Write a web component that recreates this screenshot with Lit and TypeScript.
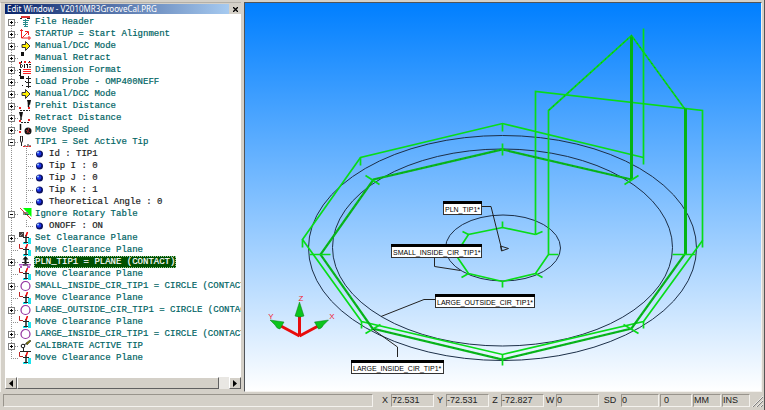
import { LitElement, html, svg, css, nothing } from "lit";
import { customElement } from "lit/decorators.js";
import { classMap } from "lit/directives/class-map.js";

type Row = { icon?: string; text: string; open?: boolean; leaf?: boolean; child?: boolean; lastChild?: boolean; selected?: boolean };

const ROWS: Row[] = [
  { icon: "header", text: "File Header" },
  { icon: "axes", text: "STARTUP = Start Alignment" },
  { icon: "arrow", text: "Manual/DCC Mode" },
  { icon: "retract", text: "Manual Retract" },
  { icon: "dim", text: "Dimension Format" },
  { icon: "probe", text: "Load Probe - OMP400NEFF" },
  { icon: "arrow", text: "Manual/DCC Mode" },
  { icon: "prehit", text: "Prehit Distance" },
  { icon: "retdist", text: "Retract Distance" },
  { icon: "speed", text: "Move Speed" },
  { icon: "tip", text: "TIP1 = Set Active Tip", open: true },
  { text: "Id : TIP1", child: true },
  { text: "Tip I : 0", child: true },
  { text: "Tip J : 0", child: true },
  { text: "Tip K : 1", child: true },
  { text: "Theoretical Angle : 0", child: true, lastChild: true },
  { icon: "rotary", text: "Ignore Rotary Table", open: true },
  { text: "ONOFF : ON", child: true, lastChild: true },
  { icon: "setplane", text: "Set Clearance Plane" },
  { icon: "move", text: "Move Clearance Plane", leaf: true },
  { icon: "plane", text: "PLN_TIP1 = PLANE (CONTACT)", selected: true },
  { icon: "move", text: "Move Clearance Plane", leaf: true },
  { icon: "circle", text: "SMALL_INSIDE_CIR_TIP1 = CIRCLE (CONTACT" },
  { icon: "move", text: "Move Clearance Plane", leaf: true },
  { icon: "circle", text: "LARGE_OUTSIDE_CIR_TIP1 = CIRCLE (CONTACT" },
  { icon: "move", text: "Move Clearance Plane", leaf: true },
  { icon: "circle", text: "LARGE_INSIDE_CIR_TIP1 = CIRCLE (CONTACT" },
  { icon: "calibrate", text: "CALIBRATE ACTIVE TIP" },
  { icon: "move", text: "Move Clearance Plane", leaf: true },
];

const clearance = svg`
  <path d="M10 6h3v6h-3zM5 10h4v2H5z" fill="#1ce4ee"/>
  <path d="M8 3v8" stroke="#222" stroke-width="1.500"/><path d="M5 5.500h6M6 10.500h4" stroke="#222"/>
  <path d="M9.500 0L8 4" stroke="#e00" stroke-width="1.500"/>`;

const ICONS: Record<string, unknown> = {
  header: svg`<path d="M3 0h9v2H3z" fill="#d33"/><path d="M2 2.500h2M9 2.500h3" stroke="#222"/><path d="M5 4.500h6M5 6.500h5M5 8.500h5M6 10.500h4M7.500 3v8" stroke="#2a8d8d"/>`,
  axes: svg`<path d="M3.500 1v9H13M2 2.500h3M11 8v4M4 10l6-6M7 3.500h3.500V7" stroke="#f02020" fill="none"/>`,
  arrow: svg`<path d="M4 4.500h3.500v-3L12 6l-4.500 4.500v-3H4z" fill="#fff000" stroke="#333" stroke-width="1"/>`,
  retract: svg`<path d="M3 0h3v4H3zM3 9h1v2H3zM11 9h1v2h-1z" fill="#111"/><path d="M1 10h2v2H1zM6 9h2v2H6zM10 10h3v1h-3z" fill="#e22"/>`,
  dim: svg`<path d="M2.500.5h1l1 1v1l-1 1h-1zM6.500 0v4M8 .5h2M9.500 0v4M11 .5h2M11 3h2M2.500 5v6M1 5.500h2M1 8.500h2M1 11.500h2" fill="none" stroke="#111"/><path d="M5 5.500h8M5 7.500h8M5 9.500h8" stroke="#f22" stroke-width="1"/>`,
  probe: svg`<path d="M2 0h4v3H2zM7 5h1v1H7zM4 9h1v1H4z" fill="#111"/><path d="M8 2.500h5M8 6.500h5M8 10.500h5M10.500 0v12" stroke="#222"/>`,
  prehit: svg`<path d="M9 0l1 4 2 1 1-5z" fill="#111"/><path d="M10.500 3v4" stroke="#111" stroke-width="1.500"/><path d="M1 7h2v2H1zM10 7h2v2h-2z" fill="#e22"/><path d="M2 10.500h10" stroke="#222" stroke-dasharray="2 1"/>`,
  retdist: svg`<path d="M1 0l1 4 2 1 1-5z" fill="#111"/><path d="M3 4v4" stroke="#111" stroke-width="1.500"/><path d="M1 8h2v2H1zM10 7h2v2h-2z" fill="#e22"/><path d="M3 10.500h9" stroke="#222" stroke-dasharray="2 1"/>`,
  speed: svg`<path d="M2.500 0v6" stroke="#111" stroke-width="1.500"/><path d="M1 7h2v2H1z" fill="#e22"/><circle cx="10" cy="7" r="3.500" fill="#111"/><path d="M8 6l4 3M11 4l-2 5" stroke="#a33"/>`,
  tip: svg`<path d="M2.500 0h2v5l-1 2-1-2z" fill="#fff" stroke="#222"/><path d="M3.500 7v3M7 9v2M10 8v3M12 9v2" stroke="#222"/><path d="M5 10.500h8" stroke="#e22" stroke-width="1" stroke-dasharray="2 1"/>`,
  rotary: svg`<path d="M5 0h8.500v9z" fill="#0f0"/><path d="M5 4h5v3H5z" fill="#888"/><path d="M2 0l11 11" stroke="#c33"/><path d="M7 6.500h4" stroke="#173"/>`,
  setplane: svg`${clearance}<path d="M1 0h5v5H1z" fill="#443c3c"/><path d="M2 4l3-3" stroke="#999"/>`,
  move: svg`<path d="M1.500 0v4.500H5" stroke="#b22" fill="none"/>${clearance}`,
  plane: svg`<path d="M7.500 0l3 3.500h-2V8h-2V3.500h-2z" fill="#111"/><path d="M1 8h12v1.500H1zM2 10h2v2H2zM9 10h3v2H9z" fill="#b25ac4"/><path d="M4 6.500h7M5 9h5" stroke="#222"/>`,
  circle: svg`<circle cx="7.500" cy="6" r="4.500" fill="none" stroke="#912e9e" stroke-width="1.200"/>`,
  calibrate: svg`<circle cx="5" cy="6" r="1.800" fill="none" stroke="#111"/><path d="M5.500 8v3.500M2 11.500h11M6 5l3-2" stroke="#222" fill="none"/><path d="M8 3l4-3 1 1-4 4z" fill="#7c7400" stroke="#222" stroke-width=".5"/>`,
};

const RING_TOP = "M536 234V91L703 110V240L644 321L503 354L362 321L303 239L361 157L503 123L644 157";
const RING_LOW = "M632 179L503 149L374 179L321 254L373 328L503 359L632 328L685 254";
const TICKS =
  "M503 123v8M361 157v8M303 239v8M362 321v7M503 354v11M644 321v7M703 240v7M644 28v136M503 143v12M366 175l14 9M310 254h21M366 333l15-9M624 324l15 9M673 254h23M625 184l14-9M503 221v6M463 231l6 3M462 277l7-4M503 281v6M543 277l-7-4M549 254h10M536 234l7-3";

const NOTES = [
  { text: "PLN_TIP1*", x: 443, y: 201, w: 39 },
  { text: "SMALL_INSIDE_CIR_TIP1*", x: 391, y: 244, w: 91 },
  { text: "LARGE_OUTSIDE_CIR_TIP1*", x: 435, y: 294, w: 100 },
  { text: "LARGE_INSIDE_CIR_TIP1*", x: 351, y: 360, w: 93 },
];

@customElement("edit-tree")
class EditTree extends LitElement {
  static styles = css`
    :host { display: flex; flex-direction: column; min-width: 0; background: #fff; }
    .title { display: flex; height: 10px; background: #d4d0c8; }
    .name {
      flex: 1; margin: 0; padding-left: 2px; white-space: nowrap;
      font: 8px/10px "Noto Sans", sans-serif; color: #fff;
      background: linear-gradient(90deg, #0a246a, #a6caf0);
    }
    button { padding: 0; border: 0; border-radius: 0; display: grid; place-items: center; }
    .close { width: 12px; background: #d4d0c8; }
    ul { list-style: none; margin: 0; padding: 2px 0 0; flex: 1; overflow: hidden; }
    li { display: flex; height: 12px; font: 9px/12px "Liberation Mono", monospace; color: #006464; -webkit-text-stroke: 0.2px; }
    li.child { color: #222; }
    .cell { position: relative; flex: none; width: 13px; height: 12px; }
    .cell svg { display: block; }
    .toggle {
      position: absolute; left: 3px; top: 3px; box-sizing: border-box; width: 7px; height: 7px; background: #fff; border: 1px solid #808080;
    }
    .icon { flex: none; display: block; }
    .label { padding: 0 1px; white-space: pre; }
    .selected .label { background: #005000; color: #fff; outline: 1px dotted #9c9; outline-offset: -1px; }
    .scroll { display: flex; height: 12px; background: #e9e7e3; }
    .scroll button {
      width: 12px; background: #d4d0c8; border: 1px solid; border-color: #fff #606060 #606060 #fff;
    }
    .scroll .thumb { flex: 1; }
    .track { width: 10px; }
  `;

  branch(r: Row, i: number) {
    const top = i === 0 ? 6 : 0;
    const bottom = i === ROWS.length - 1 ? 6 : 12;
    return html`<span class="cell">
      <svg width="13" height="12" aria-hidden="true">
        <path d="M6.500 ${top}V${bottom}${r.child ? "" : "M6 6.500H13"}" stroke="#909090" stroke-dasharray="1 1" fill="none" />
      </svg>
      ${r.child || r.leaf
        ? nothing
        : html`<button class="toggle" aria-label="${r.open ? "Collapse" : "Expand"} ${r.text}">
            <svg width="3" height="3"><path d="M0 1.500h3${r.open ? "" : "M1.500 0v3"}" stroke="#000" /></svg>
          </button>`}
    </span>`;
  }

  render() {
    return html`
      <div class="title">
        <h1 class="name">Edit Window - V2010MR3GrooveCal.PRG</h1>
        <button class="close" aria-label="Close">
          <svg width="5" height="5"><path d="M0 0l5 5M5 0L0 5" stroke="#000" stroke-width="1.300" /></svg>
        </button>
      </div>
      <ul>
        ${ROWS.map(
          (r, i) => html`<li class=${classMap({ child: !!r.child, selected: !!r.selected })}>
            ${this.branch(r, i)}${r.child
              ? html`<svg class="icon" width="30" height="12" aria-hidden="true">
                  <path d="M8.500 0V${r.lastChild ? 6 : 12}M8 6.500H16" stroke="#909090" stroke-dasharray="1 1" fill="none" />
                  <circle cx="21.500" cy="6" r="3.500" fill="#0a1060" />
                  <circle cx="21" cy="5.500" r="2.300" fill="#1c34e8" />
                  <circle cx="20" cy="4.500" r="1" fill="#9fd0ff" />
                </svg>`
              : html`<svg class="icon" width="16" height="12" aria-hidden="true">${ICONS[r.icon!]}</svg>`}<span
              class="label">${r.text}</span></li>`
        )}
      </ul>
      <div class="scroll">
        <button aria-label="Scroll left"><svg width="4" height="7"><path d="M4 0v7L0 3.500z" /></svg></button>
        <button class="thumb" aria-label="Scroll position"></button>
        <span class="track"></span>
        <button aria-label="Scroll right"><svg width="4" height="7"><path d="M0 0v7L4 3.500z" /></svg></button>
      </div>
    `;
  }
}

@customElement("part-view")
class PartView extends LitElement {
  static styles = css`
    :host { display: block; min-width: 0; background: linear-gradient(#007fff, #fff); }
    svg { display: block; width: 100%; }
    .ring { fill: none; stroke: #1c2f48; stroke-width: 1; }
    .path { fill: none; stroke: #08dc18; stroke-width: 1.7; }
    .heavy { fill: none; stroke: #08b81a; stroke-width: 2.2; }
    .grain { fill: none; stroke: #0a8a20; stroke-width: 1; stroke-dasharray: 1 4; }
    .thick { fill: none; stroke: #04b414; stroke-width: 3; }
    .leader { fill: none; stroke: #222; stroke-width: 1; }
    .note { font: 7px "Liberation Sans", sans-serif; fill: #000; }
    .axis { font: 8px "Liberation Sans", sans-serif; fill: #f02030; text-anchor: middle; }
  `;

  render() {
    return html`<svg viewBox="245 3 516 388" role="img" aria-label="Part view">
      <g class="ring">
        <ellipse cx="502.500" cy="248" rx="194" ry="112.500" />
        <ellipse cx="502.500" cy="247.500" rx="170" ry="98.500" />
        <ellipse cx="503" cy="248" rx="57.500" ry="33" />
      </g>
      <g transform="translate(-.5 .5)">
        <path class="path" d=${RING_TOP} />
        <path class="heavy" d=${RING_LOW} />
        <path class="grain" d=${RING_LOW} />
        <path class="path" d="M685 108L632 35L549 110V254L536 273L503 281L469 273L456 254L469 234L503 227L536 234" />
        <path class="grain" d="M685 108L632 35L549 110" />
        <path class="thick" d="M632 36V179M686 108V254" />
        <path class="path" d=${TICKS} />
      </g>
      <path class="leader" d="M482 206.500h9l11 44M500.500 246l8 2.500-7 2.500zM434.500 257v9.500l26 4M435 299.500h-11l-43 17M397.500 357v-10l-25-18" />
      ${NOTES.map(
        (n) => svg`<rect x=${n.x + 0.5} y=${n.y + 0.5} width=${n.w - 1} height="13" fill="#fff" stroke="#333"/>
          <rect x=${n.x} y=${n.y} width=${n.w} height="3" fill="#000"/>
          <text class="note" x=${n.x + 2} y=${n.y + 11}>${n.text}</text>`
      )}
      <path d="M299.500 336V315M299.500 336L279 325M299.500 336L320 325" stroke="#e80c0c" stroke-width="3" fill="none" />
      <path d="M299.500 302l4.500 14q-4.500 2-9 0zM270 320l14 2-4 7q-3 0-5-4zM328.500 320l-14 2 4 7q3 0 5-4z" fill="#0cc41c" stroke="#0a7a1a" stroke-width=".5" />
      <text class="axis" x="301" y="301">Z</text>
      <text class="axis" x="271" y="319">Y</text>
      <text class="axis" x="332" y="319">X</text>
    </svg>`;
  }
}

@customElement("app-root")
class AppRoot extends LitElement {
  static styles = css`
    :host { display: flex; flex-direction: column; min-height: 100vh; box-sizing: border-box; background: #d4d0c8; border-right: 1px solid #555; border-bottom: 1px solid #555; }
    .main { display: grid; grid-template-columns: 241px minmax(0, 1fr); flex: 1; padding-top: 2px; }
    .side { display: flex; padding: 1px 0 3px 4px; border-top: 1px solid #b4b0a8; border-left: 1px solid #f4f2ee; }
    edit-tree { flex: 1; }
    .stage { margin: 0 2px 0 3px; border: 1px solid; border-color: #505458 #f4f2ee #f4f2ee #505458; display: grid; }
    .status { display: flex; align-items: center; gap: 1px; padding: 2px 12px 3px 3px; font: 9px/11px "Liberation Sans", sans-serif; color: #222; }
    .box { box-sizing: border-box; height: 13px; border: 1px solid; border-color: #98948c #f4f2ee #f4f2ee #98948c; }
    .message { flex: 1; }
    .key { width: 17px; text-align: center; }
    .axis { width: 10px; }
    .speed { width: 20px; }
    .first { padding-left: 6px; }
    .value { width: 43px; }
    .mid { width: 38px; }
    .small { width: 32px; padding-left: 3px; }
    .unit { width: 28px; }
    .grip { display: block; margin: 0 -11px 0 0; }
  `;

  render() {
    return html`
      <div class="main">
        <div class="side"><edit-tree></edit-tree></div>
        <div class="stage"><part-view></part-view></div>
      </div>
      <footer class="status">
        <span class="box message"></span>
        <span class="key axis first">X</span><span class="box value">72.531</span>
        <span class="key axis">Y</span><span class="box value">-72.531</span>
        <span class="key axis">Z</span><span class="box value">-72.827</span>
        <span class="key axis">W</span><span class="box value">0</span>
        <span class="key speed">SD</span><span class="box mid">0</span>
        <span class="box small">0</span><span class="box unit">MM</span><span class="box unit">INS</span>
        <svg class="grip" width="12" height="12" aria-hidden="true">
          <path d="M2 12L12 2M6 12l6-6M10 12l2-2" stroke="#808080" /><path d="M1 12L12 1M5 12l7-7M9 12l3-3" stroke="#fff" stroke-width=".6" />
        </svg>
      </footer>
    `;
  }
}
